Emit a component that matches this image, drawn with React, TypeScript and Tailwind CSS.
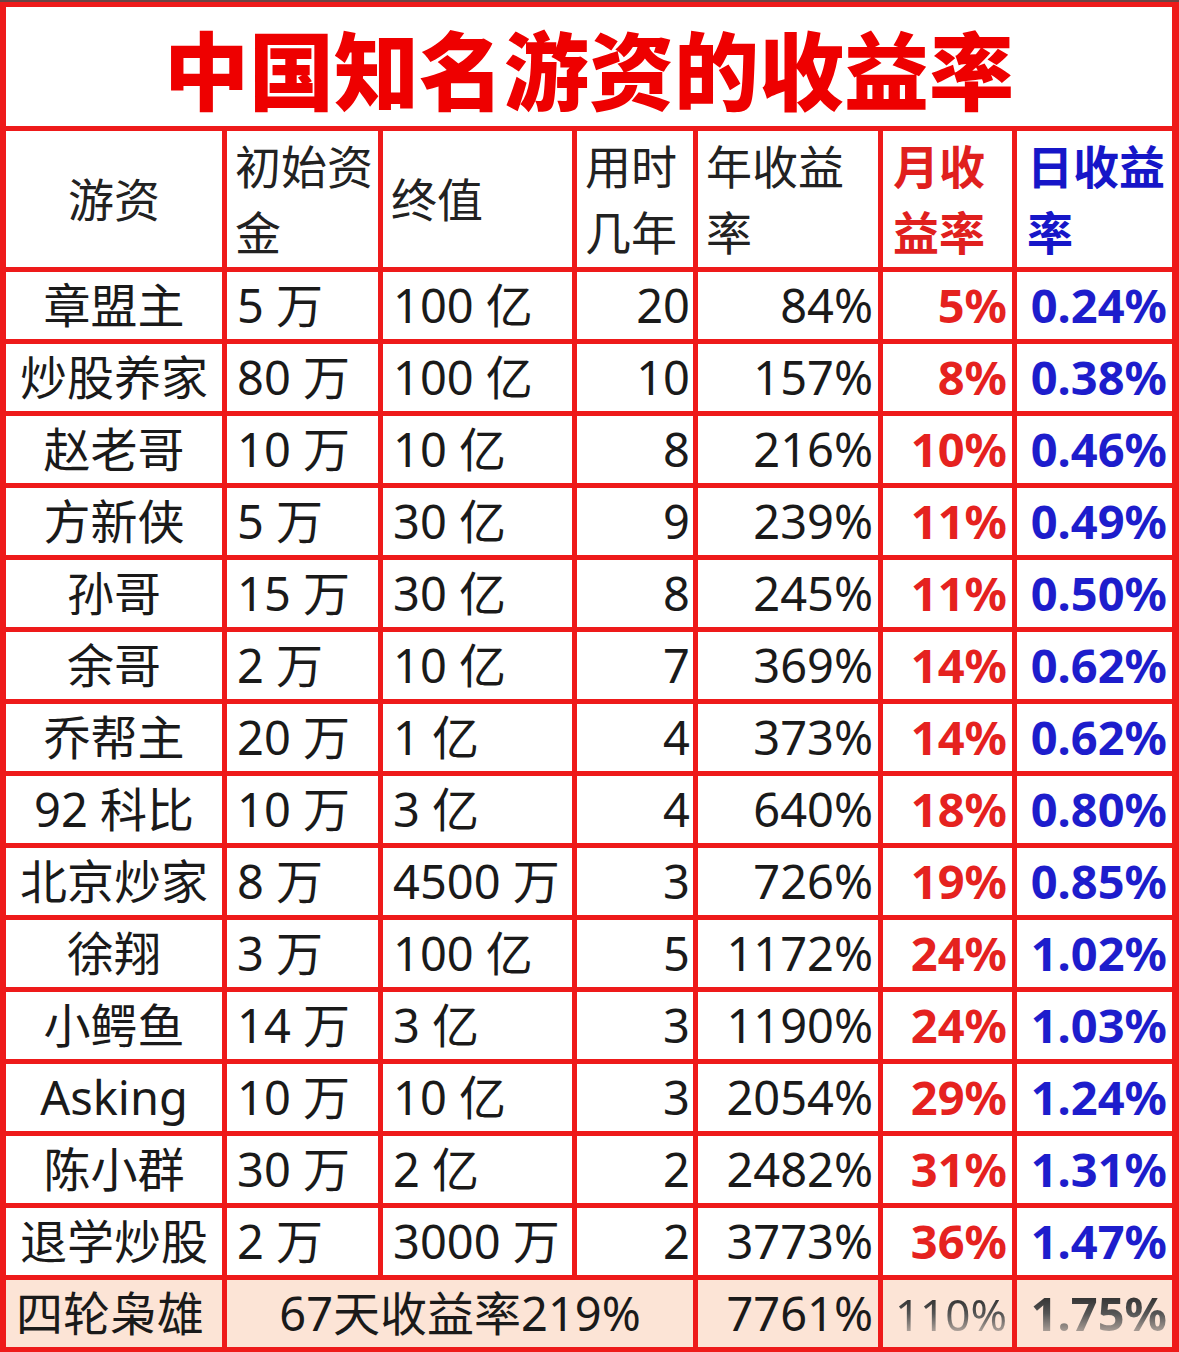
import React from 'react';

type Row = [string, string, string, string, string, string, string];

const rows: Row[] = [
  ['章盟主', '5 万', '100 亿', '20', '84%', '5%', '0.24%'],
  ['炒股养家', '80 万', '100 亿', '10', '157%', '8%', '0.38%'],
  ['赵老哥', '10 万', '10 亿', '8', '216%', '10%', '0.46%'],
  ['方新侠', '5 万', '30 亿', '9', '239%', '11%', '0.49%'],
  ['孙哥', '15 万', '30 亿', '8', '245%', '11%', '0.50%'],
  ['余哥', '2 万', '10 亿', '7', '369%', '14%', '0.62%'],
  ['乔帮主', '20 万', '1 亿', '4', '373%', '14%', '0.62%'],
  ['92 科比', '10 万', '3 亿', '4', '640%', '18%', '0.80%'],
  ['北京炒家', '8 万', '4500 万', '3', '726%', '19%', '0.85%'],
  ['徐翔', '3 万', '100 亿', '5', '1172%', '24%', '1.02%'],
  ['小鳄鱼', '14 万', '3 亿', '3', '1190%', '24%', '1.03%'],
  ['Asking', '10 万', '10 亿', '3', '2054%', '29%', '1.24%'],
  ['陈小群', '30 万', '2 亿', '2', '2482%', '31%', '1.31%'],
  ['退学炒股', '2 万', '3000 万', '2', '3773%', '36%', '1.47%'],
];

const font = "font-['Noto_Sans','Noto_Sans_CJK_SC',sans-serif]";

export default function App() {
  return (
    <div className={`w-[1179px] h-[1352px] bg-white ${font}`}>
      {/* dark strip at the very top */}
      <div className="h-[2px] bg-[#6a4444]" />
      <div className="grid grid-cols-[216px_151px_189px_116px_180px_129px_155px] grid-rows-[119px_136px_repeat(15,67px)] gap-[5px] bg-[#ee1a1a] pl-[6px] pr-[7px] pt-[5px] pb-[5px]">
        {/* Title */}
        <div className="col-span-7 bg-white flex items-center justify-center">
          <span className="text-[85px] leading-none font-black text-[#ee0000] font-['Noto_Sans_CJK_SC',sans-serif]">
            中国知名游资的收益率
          </span>
        </div>

        {/* Header */}
        <div className="bg-white flex items-center justify-center text-[46px] leading-[66px] text-[#222]">游资</div>
        <div className="bg-white flex items-center pl-[8px] text-[46px] leading-[66px] text-[#222]">初始资金</div>
        <div className="bg-white flex items-center pl-[8px] text-[46px] leading-[66px] text-[#222]">终值</div>
        <div className="bg-white flex items-center pl-[8px] text-[46px] leading-[66px] text-[#222]">用时几年</div>
        <div className="bg-white flex items-center pl-[8px] text-[46px] leading-[66px] text-[#222]">年收益率</div>
        <div className="bg-white flex items-center pl-[10px] text-[46px] leading-[66px] font-semibold text-[#e0201e]">月收益率</div>
        <div className="bg-white flex items-center pl-[10px] text-[46px] leading-[66px] font-bold text-[#1616c8]">日收益率</div>

        {/* Data rows */}
        {rows.map((r, i) => (
          <React.Fragment key={i}>
            <div className="bg-white flex items-center justify-center text-[47px] text-[#1a1a1a] whitespace-nowrap">{r[0]}</div>
            <div className="bg-white flex items-center pl-[10px] text-[47px] text-[#1a1a1a] whitespace-nowrap">{r[1]}</div>
            <div className="bg-white flex items-center pl-[10px] text-[47px] text-[#1a1a1a] whitespace-nowrap">{r[2]}</div>
            <div className="bg-white flex items-center justify-end pr-[3px] text-[47px] text-[#1a1a1a]">{r[3]}</div>
            <div className="bg-white flex items-center justify-end pr-[5px] text-[47px] text-[#1a1a1a]">{r[4]}</div>
            <div className="bg-white flex items-center justify-end pr-[5px] text-[47px] font-bold text-[#e5221f]">{r[5]}</div>
            <div className="bg-white flex items-center justify-end pr-[5px] text-[47px] font-bold text-[#1d1dcc]">{r[6]}</div>
          </React.Fragment>
        ))}

        {/* Last row */}
        <div className="bg-[#fce4d6] flex items-center pl-[10px] text-[47px] text-[#1a1a1a] whitespace-nowrap">四轮枭雄</div>
        <div className="col-span-3 bg-[#fce4d6] flex items-center justify-center text-[47px] text-[#1a1a1a] whitespace-nowrap">67天收益率219%</div>
        <div className="bg-[#fce4d6] flex items-center justify-end pr-[5px] text-[47px] text-[#1a1a1a]">7761%</div>
        <div className="bg-[#fce4d6] flex items-center justify-end pr-[5px] text-[44px] whitespace-nowrap">
          <span className="bg-linear-to-b from-[#111] via-[#555] to-transparent bg-clip-text text-transparent">110%</span>
        </div>
        <div className="bg-[#fce4d6] flex items-center justify-end pr-[5px] text-[47px] font-bold whitespace-nowrap">
          <span className="bg-linear-to-b from-[#111] via-[#555] to-transparent bg-clip-text text-transparent">1.75%</span>
        </div>
      </div>
    </div>
  );
}
